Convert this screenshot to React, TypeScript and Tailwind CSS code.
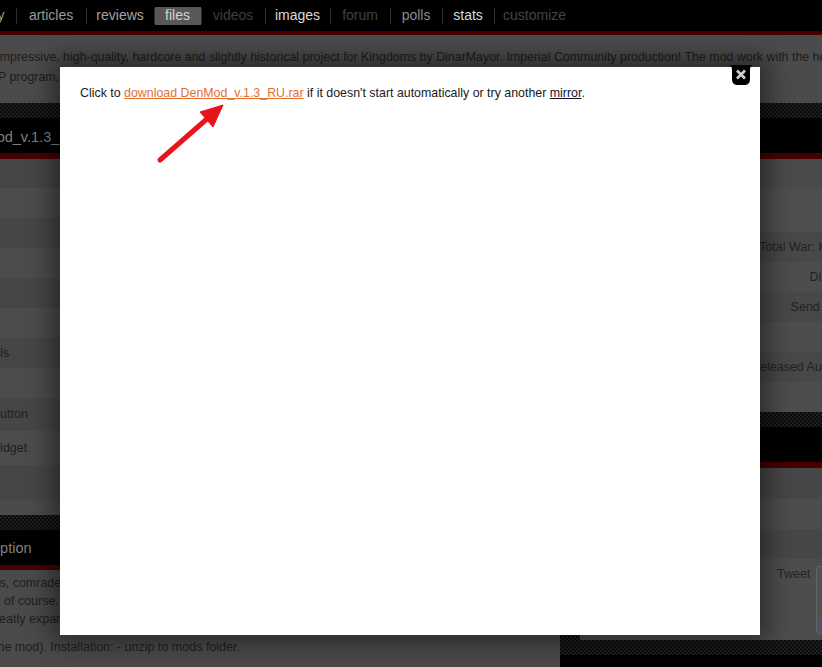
import React from "react";

const pattern =
  "bg-[repeating-conic-gradient(#1f1f1f_0%_25%,#0b0b0b_0%_50%)] bg-[length:4px_4px]";

const navItems = [
  { label: "articles", w: "w-[69px]", cls: "text-[#9a9a9a]" },
  { label: "reviews", w: "w-[67px]", cls: "text-[#a3a3a3]" },
  { label: "files", w: "w-[46px]", cls: "text-[#d2d2d2] bg-[#585858]", active: true },
  { label: "videos", w: "w-[63px]", cls: "text-[#3e3e3e]" },
  { label: "images", w: "w-[64px]", cls: "text-[#dadada]" },
  { label: "forum", w: "w-[59px]", cls: "text-[#404040]" },
  { label: "polls", w: "w-[51px]", cls: "text-[#8a8a8a]" },
  { label: "stats", w: "w-[51px]", cls: "text-[#dadada]" },
  { label: "customize", w: "w-[80px]", cls: "text-[#454545]" },
];

const Sep = () => <div className="h-[16px] w-px bg-[#2e2e2e]" />;

const Header = ({ title, offset }: { title: string; offset: string }) => (
  <div>
    <div className={`h-[15px] ${pattern}`} />
    <div className="flex h-[35px] items-center overflow-hidden bg-black pt-[4px]">
      <span className={`whitespace-nowrap text-[14.5px] text-[#808080] ${offset}`}>{title}</span>
    </div>
    <div className="h-[6px] bg-[#470000]" />
  </div>
);

const leftRows: { h: string; bg: string; text?: string; tw?: string; color?: string }[] = [
  { h: "h-[29px]", bg: "bg-[#464646]" },
  { h: "h-[30px]", bg: "bg-[#4c4c4c]" },
  { h: "h-[30px]", bg: "bg-[#464646]" },
  { h: "h-[30px]", bg: "bg-[#4c4c4c]" },
  { h: "h-[30px]", bg: "bg-[#464646]" },
  { h: "h-[30px]", bg: "bg-[#4c4c4c]" },
  { h: "h-[30px]", bg: "bg-[#464646]", text: "Mod tools", tw: "-ml-[45px] w-[54px]" },
  { h: "h-[30px]", bg: "bg-[#4c4c4c]", text: "Report", tw: "-ml-[36px] w-[38px]", color: "text-[#4a5670]" },
  { h: "h-[33px]", bg: "bg-[#464646]", text: "Embed button", tw: "-ml-[50px] w-[76px]" },
  { h: "h-[34px]", bg: "bg-[#4c4c4c]", text: "Embed widget", tw: "-ml-[52px] w-[78px]" },
  { h: "h-[35px]", bg: "bg-[#464646]" },
];

const rightRows: { h: string; bg: string; text?: string }[] = [
  { h: "h-[30px]", bg: "bg-[#4a4a4a]" },
  { h: "h-[43px]", bg: "bg-[#4f4f4f]" },
  { h: "h-[30px]", bg: "bg-[#484848]", text: "Total War: Kingdoms" },
  { h: "h-[30px]", bg: "bg-[#4d4d4d]", text: "DinarMayor" },
  { h: "h-[30px]", bg: "bg-[#484848]", text: "Send Message" },
  { h: "h-[30px]", bg: "bg-[#4d4d4d]" },
  { h: "h-[30px]", bg: "bg-[#484848]", text: "Released Aug 6, 2019" },
  { h: "h-[30px]", bg: "bg-[#4d4d4d]" },
];

const rightRows2 = [
  "h-[31px] bg-[#474747]",
  "h-[30px] bg-[#4d4d4d]",
  "h-[30px] bg-[#474747]",
];

export default function App() {
  return (
    <div className="relative h-[667px] w-[822px] overflow-hidden bg-[#4a4a4a] font-['Liberation_Sans',Arial,sans-serif]">
      {/* top nav */}
      <div className="flex h-[31px] items-center bg-black text-[14px]">
        <div className="-ml-[64px] px-[11px] text-[#9a9a9a]">summary</div>
        {navItems.map((n) => (
          <React.Fragment key={n.label}>
            <Sep />
            <div className={`flex ${n.w} justify-center`}>
              <span
                className={`flex h-[18px] items-center justify-center ${n.active ? "w-full" : ""} ${n.cls}`}
              >
                {n.label}
              </span>
            </div>
          </React.Fragment>
        ))}
      </div>
      <div className="h-[4px] bg-[#440000]" />

      {/* summary band */}
      <div className="h-[65px] bg-[#4b4b4b] pt-[12px] text-[12.4px] leading-[20px] text-[#1c1c1c]">
        <div className="-ml-[3px] whitespace-nowrap">
          impressive, high-quality, hardcore and slightly historical project for Kingdoms by DinarMayor.
          Imperial Community production! The mod work with the help of the TWP program.
        </div>
        <div className="-ml-[2px] whitespace-nowrap">P program, install it first.</div>
      </div>

      {/* columns */}
      <div className="flex">
        <div className="w-[560px] shrink-0">
          <div className="h-[3px]" />
          <Header title="DenMod_v.1.3_RU.rar" offset="-ml-[42px]" />
          {leftRows.map((r, i) => (
            <div
              key={i}
              className={`flex items-center ${r.h} ${r.bg} text-[12.5px] ${r.color ?? "text-[#1e1e1e]"}`}
            >
              {r.text && <div className={`whitespace-nowrap text-right ${r.tw}`}>{r.text}</div>}
            </div>
          ))}
          <div className="h-[15px] bg-[#4b4b4b]" />
          <div>
            <div className={`h-[15px] ${pattern}`} />
            <div className="flex h-[35px] items-center overflow-hidden bg-black pt-[3px]">
              <span className="-ml-[41px] whitespace-nowrap text-[14.5px] text-[#808080]">Description</span>
            </div>
            <div className="h-[5px] bg-[#470000]" />
          </div>
          <div className="pt-[4px] text-[12.5px] leading-[18px] text-[#1e1e1e]">
            <div className="-ml-[36px] whitespace-nowrap">Hi guys, comrades and friends of the mod.</div>
            <div className="-ml-[3px] whitespace-nowrap">t of course, the map is greatly</div>
            <div className="-ml-[12px] whitespace-nowrap">greatly expanded, new factions.</div>
            <div className="mt-[10px] -ml-[6px] whitespace-nowrap">
              the mod). Installation: - unzip to mods folder.
            </div>
          </div>
        </div>

        <div className={`flex w-[320px] shrink-0 flex-col ${pattern}`}>
          <div className="ml-[20px] w-[300px] bg-[#4a4a4a]">
            <div className="h-[3px]" />
            <Header title="Details" offset="ml-[20px]" />
            {rightRows.map((r, i) => (
              <div
                key={i}
                className={`flex items-center justify-end pr-[6px] ${r.h} ${r.bg} text-[12.5px] text-[#222]`}
              >
                {r.text && <span className="whitespace-nowrap">{r.text}</span>}
              </div>
            ))}
            <Header title="Share" offset="ml-[20px]" />
            {rightRows2.map((c, i) => (
              <div key={i} className={c} />
            ))}
            <div className="flex h-[81px] items-start bg-[#4d4d4d] pl-[197px] pt-[7px]">
              <span className="text-[12.5px] leading-[16px] text-[#262626]">Tweet</span>
              <div className="ml-[6px] flex h-[68px] w-[60px] flex-col justify-end overflow-hidden rounded-[3px] border border-[#636363] bg-[#505050]">
                <div className="h-[16px] bg-[#4a5567]" />
              </div>
            </div>
          </div>
          <div className="h-[15px]" />
          <div className="h-[12px] bg-black" />
        </div>
      </div>

      {/* lightbox */}
      <div className="absolute left-[60px] top-[67px] h-[568px] w-[700px] bg-white pl-[20px] pt-[19px] shadow-[0_0_24px_8px_rgba(0,0,0,0.45)]">
        <p className="text-[12.4px] leading-[15px] text-[#1a1a1a]">
          Click to{" "}
          <a href="#" className="text-[#e4702f] underline">
            download DenMod_v.1.3_RU.rar
          </a>{" "}
          if it doesn't start automatically or try another{" "}
          <a href="#" className="text-[#15122b] underline">
            mirror
          </a>
          .
        </p>

        <svg className="absolute left-[92px] top-[28px]" width="80" height="72" viewBox="92 28 80 72">
          <line x1="100" y1="93" x2="148" y2="51" stroke="#e8141c" strokeWidth="5" strokeLinecap="round" />
          <polygon
            points="163,38 140,45 153,60"
            fill="#e8141c"
            stroke="#e8141c"
            strokeWidth="1"
            strokeLinejoin="round"
          />
        </svg>

        <div className="absolute left-[668px] top-[-2px] cursor-pointer">
          <svg width="26" height="21" viewBox="0 0 26 21">
            <path
              d="M0 0 H26 C23 0 22 2 22 5 V14 C22 18 20 20 16 20 H10 C6 20 4 18 4 14 V5 C4 2 3 0 0 0 Z"
              fill="#000"
            />
            <path d="M9 5.5 L17 13.5 M17 5.5 L9 13.5" stroke="#cfcfcf" strokeWidth="2.6" />
          </svg>
        </div>
      </div>
    </div>
  );
}
